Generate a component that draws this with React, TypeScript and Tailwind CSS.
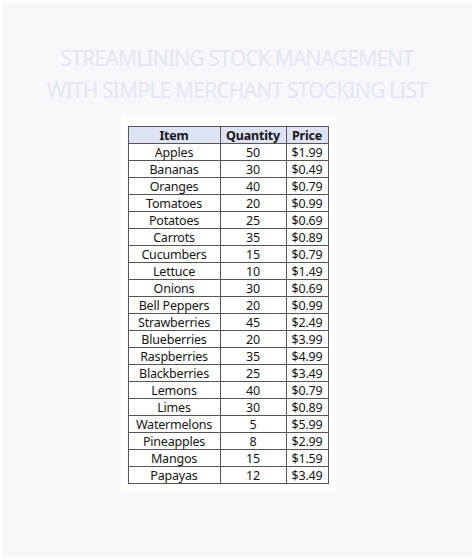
import React from "react";

const rows: [string, number, string][] = [
  ["Apples", 50, "$1.99"],
  ["Bananas", 30, "$0.49"],
  ["Oranges", 40, "$0.79"],
  ["Tomatoes", 20, "$0.99"],
  ["Potatoes", 25, "$0.69"],
  ["Carrots", 35, "$0.89"],
  ["Cucumbers", 15, "$0.79"],
  ["Lettuce", 10, "$1.49"],
  ["Onions", 30, "$0.69"],
  ["Bell Peppers", 20, "$0.99"],
  ["Strawberries", 45, "$2.49"],
  ["Blueberries", 20, "$3.99"],
  ["Raspberries", 35, "$4.99"],
  ["Blackberries", 25, "$3.49"],
  ["Lemons", 40, "$0.79"],
  ["Limes", 30, "$0.89"],
  ["Watermelons", 5, "$5.99"],
  ["Pineapples", 8, "$2.99"],
  ["Mangos", 15, "$1.59"],
  ["Papayas", 12, "$3.49"],
];

export default function App() {
  return (
    <div className="h-[560px] w-[474px] bg-white p-[2px]">
      <div className="flex h-full w-full flex-col items-center bg-[#f7f8fc]">
        <h1 className="mt-[40px] text-center font-['Noto_Sans',sans-serif] text-[21px] leading-[32px] tracking-[-0.8px] text-[#e2e6ef]">
          STREAMLINING STOCK MANAGEMENT
          <br />
          WITH SIMPLE MERCHANT STOCKING LIST
        </h1>
        <div className="mt-[11px] mr-[18px] bg-white pt-[9px] pr-[7px] pb-[8px] pl-[7px]">
          <table className="border-collapse font-['Noto_Sans',sans-serif] text-[12.5px] tracking-[-0.2px] text-[#151515]">
            <thead>
              <tr className="h-[17px] bg-[#dde2f5]">
                <th className="w-[92px] border border-[#555555] p-0 leading-[15px] font-bold">Item</th>
                <th className="w-[66px] border border-[#555555] p-0 leading-[15px] font-bold">Quantity</th>
                <th className="w-[42px] border border-[#555555] p-0 leading-[15px] font-bold">Price</th>
              </tr>
            </thead>
            <tbody>
              {rows.map(([name, qty, price]) => (
                <tr key={name} className="h-[17px]">
                  <td className="border border-[#555555] p-0 text-center leading-[15px]">{name}</td>
                  <td className="border border-[#555555] p-0 text-center leading-[15px]">{qty}</td>
                  <td className="border border-[#555555] p-0 text-center leading-[15px]">{price}</td>
                </tr>
              ))}
            </tbody>
          </table>
        </div>
      </div>
    </div>
  );
}
